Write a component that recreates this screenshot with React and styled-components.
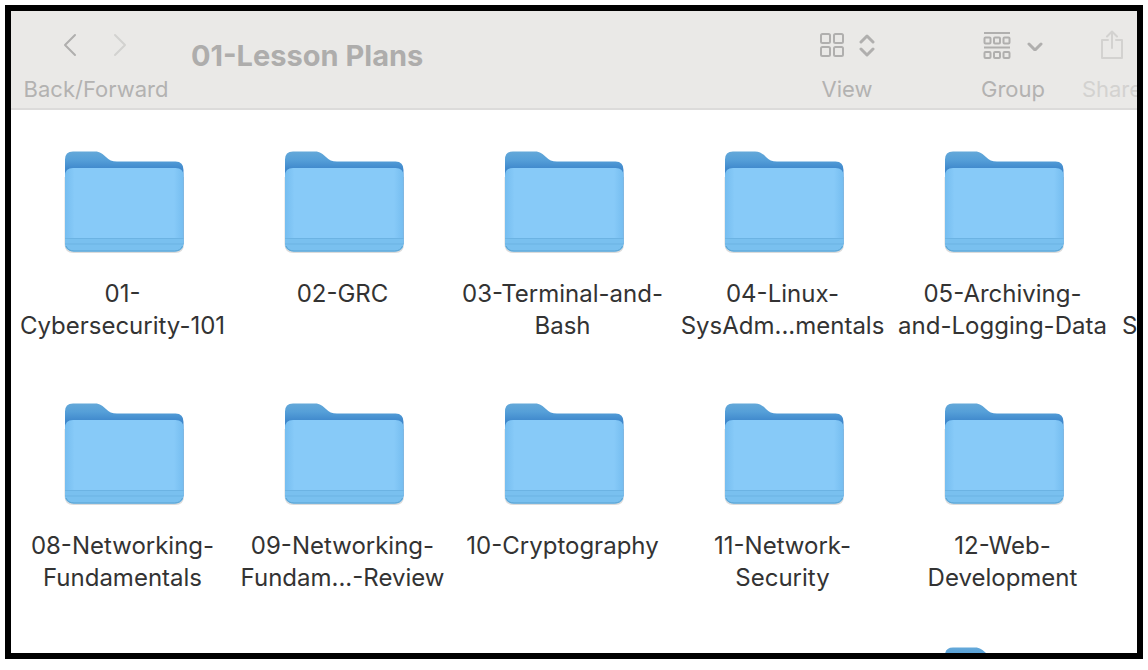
import React from 'react';
import styled, { createGlobalStyle } from 'styled-components';

const GlobalStyle = createGlobalStyle`
  * { box-sizing: border-box; }
  body {
    margin: 0;
    background: #fff;
    font-family: Inter, "Liberation Sans", sans-serif;
  }
  button {
    border: 0;
    padding: 0;
    background: none;
    font: inherit;
    color: inherit;
  }
`;

const Page = styled.div`
  height: 100vh;
  padding: 5px 5px 11px;
`;

const Window = styled.main`
  display: flex;
  flex-direction: column;
  height: 100%;
  border: 6px solid #000;
  background: #fff;
  overflow: hidden;
`;

const Toolbar = styled.header`
  display: flex;
  flex: none;
  align-items: flex-start;
  height: 99px;
  padding: 16px 0 0 13px;
  border-bottom: 2px solid #dcdbda;
  background: #eae9e7;
  color: #b3b2b1;
  overflow: hidden;
`;

const Control = styled.div`
  display: flex;
  flex: none;
  flex-direction: column;
  align-items: center;
  gap: 12px;
  width: ${(p) => p.$width};
  margin-left: ${(p) => p.$before || '0'};
  color: ${(p) => (p.$faded ? '#d3d2d0' : 'inherit')};
`;

const IconRow = styled.span`
  display: flex;
  align-items: center;
  justify-content: center;
  gap: ${(p) => p.$gap || '0'};
  height: 36px;
`;

const IconButton = styled.button`
  display: flex;
  color: ${(p) => (p.$faded ? '#d3d2d0' : '#b0afae')};
`;

const ControlLabel = styled.span`
  font-size: 22px;
  line-height: 28px;
  white-space: nowrap;
`;

const Title = styled.h1`
  flex: 1;
  margin: 9px 0 0 23px;
  color: #aeadac;
  font-size: 29px;
  font-weight: 700;
  line-height: 40px;
  white-space: nowrap;
`;

const Files = styled.ul`
  display: grid;
  grid-template-columns: repeat(6, 220px);
  grid-template-rows: 252px 244px 252px;
  margin: 0;
  padding: 37px 0 0 3px;
  list-style: none;
`;

const Cell = styled.li`
  grid-column: ${(p) => p.$column};
  grid-row: ${(p) => p.$row};
`;

const FileButton = styled.button`
  display: flex;
  flex-direction: column;
  align-items: center;
  gap: 19px;
  width: 100%;
`;

const FileName = styled.span`
  padding-right: 3px;
  color: #333;
  font-size: 24px;
  line-height: 32px;
  text-align: center;
  white-space: pre;
`;

const CutName = styled(FileName)`
  display: block;
  padding: 163px 0 0 8px;
  text-align: left;
`;

const Stroke = ({ w, h, width = 2, children }) => (
  <svg width={w} height={h} viewBox={`0 0 ${w} ${h}`} fill="none" stroke="currentColor"
    strokeWidth={width} strokeLinecap="round" strokeLinejoin="round" aria-hidden="true">
    {children}
  </svg>
);

const FolderIcon = () => (
  <svg width="128" height="112" viewBox="0 0 128 112" aria-hidden="true">
    <path d="M4.500 30H124V97Q124 106 115 106H13.500Q4.500 106 4.500 97Z" fill="#000" opacity=".14" />
    <path d="M5 97V12.500Q5 4.500 13 4.500H35C40 4.500 43 7 46 10C49 13 52 14.500 57 14.500H115.500Q123.500 14.500 123.500 23V97Z" fill="url(#folder-back)" />
    <path d="M5 29Q5 21 13 21H115.500Q123.500 21 123.500 29V96Q123.500 104.500 114.500 104.500H14Q5 104.500 5 96Z" fill="url(#folder-front)" />
    <path d="M5 91.500H123.500V96Q123.500 104.500 114.500 104.500H14Q5 104.500 5 96Z" fill="#79c0ef" />
    <path d="M5 91.500H123.500M5 97H123.500" stroke="#6cb3e3" strokeWidth="1" />
    <path d="M6 99Q8 104 14 104H114.500Q120.500 104 122.500 99" fill="none" stroke="#5aa3d1" strokeWidth="1" />
  </svg>
);

const FolderGradients = () => (
  <svg width="0" height="0" aria-hidden="true" display="block">
    <defs>
      <linearGradient id="folder-back" gradientUnits="userSpaceOnUse" x1="0" y1="4" x2="0" y2="22">
        <stop offset="0" stopColor="#65a9d9" />
        <stop offset=".5" stopColor="#559fd8" />
        <stop offset="1" stopColor="#3f88cc" />
      </linearGradient>
      <linearGradient id="folder-front" x1="0" y1="0" x2="1" y2="0">
        <stop offset="0" stopColor="#75bdf0" />
        <stop offset=".08" stopColor="#87caf8" />
        <stop offset=".92" stopColor="#87caf8" />
        <stop offset="1" stopColor="#75bdf0" />
      </linearGradient>
    </defs>
  </svg>
);

const GridIcon = () => (
  <Stroke w={26} h={26}>
    {[2, 15].map((y) => [2, 15].map((x) => (
      <rect key={`${x}-${y}`} x={x} y={y} width="9" height="9" rx="1.500" />
    )))}
  </Stroke>
);

const UpDownIcon = () => (
  <Stroke w={16} h={26} width={3}>
    <path d="M2 10L8 4L14 10M2 17L8 23L14 17" />
  </Stroke>
);

const GroupIcon = () => (
  <Stroke w={28} h={30}>
    <path d="M1 3H27M1 17.500H27" strokeLinecap="butt" />
    {[7.5, 22].map((y) => [1.5, 11, 20.5].map((x) => (
      <rect key={`${x}-${y}`} x={x} y={y} width="6" height="6" rx="1" />
    )))}
  </Stroke>
);

const DownIcon = () => (
  <Stroke w={16} h={12} width={3}>
    <path d="M2 5L8 11L14 5" />
  </Stroke>
);

const ShareIcon = () => (
  <Stroke w={24} h={32}>
    <path d="M8 11H2V29H22V11H16M12 19V3M7 7.500L12 2.500L17 7.500" />
  </Stroke>
);

const folders = [
  { name: '01-\nCybersecurity-101', row: 1, column: 1 },
  { name: '02-GRC', row: 1, column: 2 },
  { name: '03-Terminal-and-\nBash', row: 1, column: 3 },
  { name: '04-Linux-\nSysAdm...mentals', row: 1, column: 4 },
  { name: '05-Archiving-\nand-Logging-Data', row: 1, column: 5 },
  { name: '08-Networking-\nFundamentals', row: 2, column: 1 },
  { name: '09-Networking-\nFundam...-Review', row: 2, column: 2 },
  { name: '10-Cryptography', row: 2, column: 3 },
  { name: '11-Network-\nSecurity', row: 2, column: 4 },
  { name: '12-Web-\nDevelopment', row: 2, column: 5 },
  { row: 3, column: 5 },
];

export default function App() {
  return (
    <>
      <GlobalStyle />
      <FolderGradients />
      <Page>
        <Window>
          <Toolbar>
            <Control $width="144px">
              <IconRow $gap="34px">
                <IconButton aria-label="Back">
                  <Stroke w={16} h={24}><path d="M12 2L2 12L12 22" /></Stroke>
                </IconButton>
                <IconButton aria-label="Forward" $faded>
                  <Stroke w={16} h={24}><path d="M2 2L12 12L2 22" /></Stroke>
                </IconButton>
              </IconRow>
              <ControlLabel>Back/Forward</ControlLabel>
            </Control>
            <Title>01-Lesson Plans</Title>
            <Control $width="56px">
              <IconButton aria-label="View">
                <IconRow $gap="14px"><GridIcon /><UpDownIcon /></IconRow>
              </IconButton>
              <ControlLabel>View</ControlLabel>
            </Control>
            <Control $width="64px" $before="106px">
              <IconButton aria-label="Group">
                <IconRow $gap="16px"><GroupIcon /><DownIcon /></IconRow>
              </IconButton>
              <ControlLabel>Group</ControlLabel>
            </Control>
            <Control $width="50px" $before="42px" $faded>
              <IconButton aria-label="Share" $faded>
                <IconRow><ShareIcon /></IconRow>
              </IconButton>
              <ControlLabel>Share</ControlLabel>
            </Control>
          </Toolbar>
          <Files>
            {folders.map(({ name, row, column }) => (
              <Cell key={`${row}-${column}`} $row={row} $column={column}>
                <FileButton aria-label={name ? undefined : 'Folder'}>
                  <FolderIcon />
                  {name && <FileName>{name}</FileName>}
                </FileButton>
              </Cell>
            ))}
            <Cell $row={1} $column={6}>
              <CutName>S</CutName>
            </Cell>
          </Files>
        </Window>
      </Page>
    </>
  );
}
